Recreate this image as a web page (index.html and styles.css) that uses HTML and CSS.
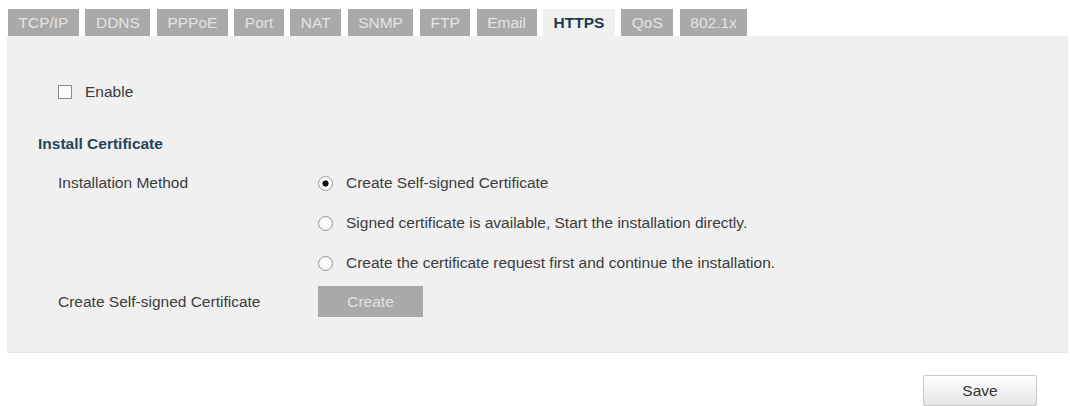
FILE: index.html
```html
<!DOCTYPE html>
<html lang="en">
<head>
    <meta charset="UTF-8">
    <meta name="viewport" content="width=device-width, initial-scale=1.0">
    <title>Network - HTTPS</title>
    <link rel="stylesheet" href="styles.css">
</head>
<body>
    <div class="page">
        <!-- Tabs -->
        <div class="tabs">
            <a class="tab">TCP/IP</a>
            <a class="tab">DDNS</a>
            <a class="tab">PPPoE</a>
            <a class="tab">Port</a>
            <a class="tab">NAT</a>
            <a class="tab">SNMP</a>
            <a class="tab">FTP</a>
            <a class="tab">Email</a>
            <a class="tab active">HTTPS</a>
            <a class="tab">QoS</a>
            <a class="tab">802.1x</a>
        </div>

        <!-- HTTPS panel -->
        <div class="panel">
            <label class="enable-row">
                <input type="checkbox" class="check">
                <span>Enable</span>
            </label>

            <div class="section-title">Install Certificate</div>

            <div class="form-row">
                <div class="label">Installation Method</div>
                <label class="option">
                    <input type="radio" name="method" class="radio" checked>
                    <span>Create Self-signed Certificate</span>
                </label>
            </div>
            <div class="form-row">
                <div class="label"></div>
                <label class="option">
                    <input type="radio" name="method" class="radio">
                    <span>Signed certificate is available, Start the installation directly.</span>
                </label>
            </div>
            <div class="form-row">
                <div class="label"></div>
                <label class="option">
                    <input type="radio" name="method" class="radio">
                    <span>Create the certificate request first and continue the installation.</span>
                </label>
            </div>
            <div class="form-row button-row">
                <div class="label">Create Self-signed Certificate</div>
                <button class="btn-disabled" disabled>Create</button>
            </div>
        </div>

        <div class="actions">
            <button class="btn-save">Save</button>
        </div>
    </div>
</body>
</html>
```

FILE: styles.css
```css
body {
    font-family: 'Liberation Sans', Arial, sans-serif;
    font-size: 15.5px;
    color: #3c3c3c;
    margin: 0;
    background-color: #ffffff;
}

.page {
    padding: 9px 2px 0 7px;
}

.tabs {
    display: flex;
    gap: 6.5px;
    padding-left: 1px;
}

.tab {
    display: block;
    height: 27px;
    line-height: 27px;
    padding: 0 10.5px;
    background: #a9a9a9;
    color: #e4e4e4;
    cursor: pointer;
}

.tab.active {
    background: #f0f0f0;
    color: #1f3a50;
    font-weight: bold;
}

.panel {
    background: #f0f0f0;
    padding: 46px 0 32px 0;
    border-bottom: 1px solid #e9e9e9;
}

.enable-row {
    display: flex;
    align-items: center;
    height: 20px;
    padding-left: 51px;
}

.check {
    appearance: none;
    width: 14px;
    height: 14px;
    margin: 0 13px 0 0;
    border: 1px solid #8c8c8c;
    background: #fafafa;
}

.section-title {
    margin-top: 32px;
    padding-left: 31px;
    height: 20px;
    line-height: 20px;
    font-weight: bold;
    color: #25445c;
}

.form-row {
    display: flex;
    align-items: center;
    height: 40px;
    padding-left: 51px;
}

.section-title + .form-row {
    margin-top: 9px;
}

.button-row {
    height: 37px;
}

.label {
    width: 260px;
}

.option {
    display: flex;
    align-items: center;
}

.radio {
    appearance: none;
    width: 15px;
    height: 15px;
    margin: 0 13px 0 0;
    border: 1px solid #9a9a9a;
    border-radius: 50%;
    background: radial-gradient(circle, #ffffff 0, #f0f0f0 100%);
}

.radio:checked {
    background: radial-gradient(circle, #111111 0, #111111 2.8px, #ffffff 3.4px, #f0f0f0 100%);
}

.btn-disabled {
    width: 105px;
    height: 31px;
    border: none;
    background: #a9a9a9;
    color: #e2e2e2;
    font-family: inherit;
    font-size: 15.5px;
}

.actions {
    display: flex;
    justify-content: flex-end;
    margin-top: 22px;
    padding-right: 31px;
}

.btn-save {
    width: 114px;
    height: 31px;
    border: 1px solid #c8c8c8;
    border-radius: 2px;
    background: linear-gradient(#ffffff, #e6e6e6);
    color: #333333;
    font-family: inherit;
    font-size: 15.5px;
    cursor: pointer;
}
```
